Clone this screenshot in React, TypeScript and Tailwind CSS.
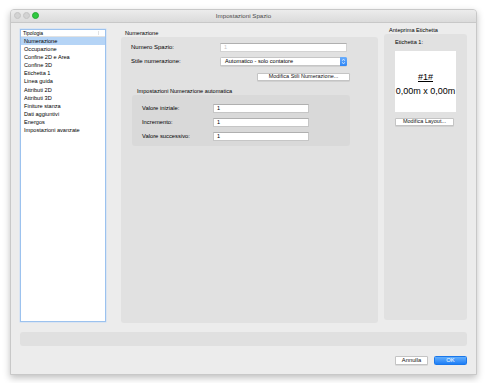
const font = { fontFamily: '"Liberation Sans", Arial, sans-serif' };

const categories = [
  "Numerazione",
  "Occupazione",
  "Confine 2D e Area",
  "Confine 3D",
  "Etichetta 1",
  "Linea guida",
  "Attributi 2D",
  "Attributi 3D",
  "Finiture stanza",
  "Dati aggiuntivi",
  "Energos",
  "Impostazioni avanzate",
];

const Field = ({ value, className = "" }: { value: string; className?: string }) => (
  <div
    className={`h-[9px] bg-white border border-[#c6c6c6] border-t-[#b0b0b0] pl-[3px] text-[5.5px] leading-[7px] ${className}`}
  >
    {value}
  </div>
);

const PushButton = ({ label, className = "" }: { label: string; className?: string }) => (
  <div
    className={`h-[8px] bg-white border border-[#c4c4c4] rounded-[1px] shadow-[0_0.5px_0.5px_rgba(0,0,0,0.15)] flex items-center justify-center text-[5.5px] leading-none text-[#111] ${className}`}
  >
    {label}
  </div>
);

const App = () => {
  return (
    <div className="w-[486px] h-[383px] bg-white pt-[9px] pl-[10px] text-black" style={font}>
      <div className="w-[467px] h-[366px] bg-[#ececec] border border-[#c8c8c8] rounded-t-[4px] shadow-[0_3px_7px_rgba(0,0,0,0.25)] flex flex-col overflow-hidden">
        {/* Title bar */}
        <div className="relative h-[13px] bg-gradient-to-b from-[#ececec] to-[#dbdbdb] border-b border-[#c8c8c8] flex items-center justify-center">
          <div className="absolute left-[3px] top-[2px] flex gap-[2px]">
            <span className="w-[7px] h-[7px] rounded-full bg-[#d3d3d3] border border-[#c4c4c4]" />
            <span className="w-[7px] h-[7px] rounded-full bg-[#d3d3d3] border border-[#c4c4c4]" />
            <span className="w-[7px] h-[7px] rounded-full bg-[#2fc93f] border border-[#26a834]" />
          </div>
          <span className="text-[6.2px] text-[#4a4a4a]">Impostazioni Spazio</span>
        </div>

        {/* Body */}
        <div className="flex px-[9px] mt-[6px] h-[294px]">
          {/* Category list */}
          <div className="w-[86px] h-[293px] bg-white border border-[#9cc2ee] shadow-[0_0_0_0.5px_#c7dcf5]">
            <div className="h-[7px] flex border-b border-[#e2e2e2]">
              <span className="flex-1 pl-[2px] text-[5px] leading-[7px]">Tipologia</span>
              <span className="w-[7px] border-l border-[#e2e2e2] my-[1px]" />
            </div>
            {categories.map((c, i) => (
              <div
                key={c}
                className={`h-[8.1px] pl-[3px] text-[5.6px] leading-[8.1px] ${i === 0 ? "bg-[#b5d4f6]" : ""}`}
              >
                {c}
              </div>
            ))}
          </div>

          {/* Main column */}
          <div className="ml-[15px] w-[257px]">
            <div className="h-[8px] pl-[4px] text-[5.6px] leading-[8px]">Numerazione</div>
            <div className="h-[286px] bg-[#e1e1e1] rounded-[3px] pt-[6px]">
              <div className="flex items-center h-[9px]">
                <span className="w-[99px] pl-[10px] text-[6px]">Numero Spazio:</span>
                <Field value="1" className="w-[127px] text-[#c4c4c4] border-[#d2d2d2]" />
              </div>
              <div className="flex items-center h-[9px] mt-[5px]">
                <span className="w-[99px] pl-[10px] text-[6px]">Stile numerazione:</span>
                <div className="w-[127px] h-[9px] bg-white border border-[#c6c6c6] rounded-[1.5px] flex items-center shadow-[0_0.5px_0.5px_rgba(0,0,0,0.15)]">
                  <span className="flex-1 pl-[4px] text-[5.6px] leading-none">Automatico - solo contatore</span>
                  <span className="w-[7px] h-[9px] -mr-px -my-px rounded-r-[1.5px] bg-gradient-to-b from-[#6aaefc] to-[#2d86f6] flex flex-col items-center justify-center gap-[1px]">
                    <svg width="3" height="2" viewBox="0 0 3 2"><path d="M0 2 L1.5 0 L3 2" fill="none" stroke="white" strokeWidth="0.6" /></svg>
                    <svg width="3" height="2" viewBox="0 0 3 2"><path d="M0 0 L1.5 2 L3 0" fill="none" stroke="white" strokeWidth="0.6" /></svg>
                  </span>
                </div>
              </div>
              <PushButton label="Modifica Stili Numerazione..." className="ml-[136px] mt-[7px] w-[93px]" />

              <div className="mt-[6px] pl-[16px] h-[8px] text-[5.6px] leading-[8px]">
                Impostazioni Numerazione automatica
              </div>
              <div className="ml-[11px] w-[218px] h-[51px] bg-[#d9d9d9] rounded-[3px] pt-[9px] flex flex-col gap-[5px]">
                {[
                  ["Valore iniziale:", "1"],
                  ["Incremento:", "1"],
                  ["Valore successivo:", "1"],
                ].map(([l, v]) => (
                  <div key={l} className="flex items-center h-[9px]">
                    <span className="w-[81px] pl-[10px] text-[5.8px]">{l}</span>
                    <Field value={v} className="w-[96px]" />
                  </div>
                ))}
              </div>
            </div>
          </div>

          {/* Preview column */}
          <div className="ml-[6px] w-[83px] -mt-[3px]">
            <div className="h-[8px] pl-[5px] text-[5.6px] leading-[8px]">Anteprima Etichetta</div>
            <div className="h-[286px] bg-[#e1e1e1] rounded-[3px] pt-[5px] pl-[11px]">
              <div className="h-[7px] text-[5.6px] leading-[7px]">Etichetta 1:</div>
              <div className="mt-[5px] w-[61px] h-[61px] bg-white flex flex-col items-center pt-[21px]">
                <span className="text-[9px] leading-[10px] underline underline-offset-[1px]">#1#</span>
                <span className="text-[9px] leading-[10px] mt-[4px]">0,00m x 0,00m</span>
              </div>
              <PushButton label="Modifica Layout..." className="mt-[6px] w-[59px]" />
            </div>
          </div>
        </div>

        {/* Status bar */}
        <div className="mx-[9px] mt-[9px] h-[14px] bg-[#e0e0e0] rounded-[3px]" />

        {/* Buttons */}
        <div className="flex justify-end gap-[6px] px-[9px] mt-[10px]">
          <PushButton label="Annulla" className="w-[33px] h-[9px] text-[5.8px]" />
          <div className="w-[33px] h-[9px] rounded-[1.5px] bg-gradient-to-b from-[#62aefc] to-[#1b7ef6] border border-[#1a77ea] flex items-center justify-center text-[5.8px] leading-none text-white">
            OK
          </div>
        </div>
      </div>
    </div>
  );
};

export default App;
